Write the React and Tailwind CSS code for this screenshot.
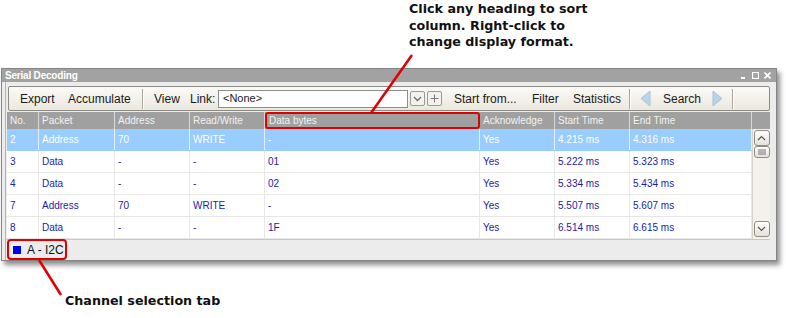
import React from "react";

const rows = [
  { no: "2", packet: "Address", addr: "70", rw: "WRITE", data: "-", ack: "Yes", start: "4.215 ms", end: "4.316 ms", sel: true },
  { no: "3", packet: "Data", addr: "-", rw: "-", data: "01", ack: "Yes", start: "5.222 ms", end: "5.323 ms" },
  { no: "4", packet: "Data", addr: "-", rw: "-", data: "02", ack: "Yes", start: "5.334 ms", end: "5.434 ms" },
  { no: "7", packet: "Address", addr: "70", rw: "WRITE", data: "-", ack: "Yes", start: "5.507 ms", end: "5.607 ms" },
  { no: "8", packet: "Data", addr: "-", rw: "-", data: "1F", ack: "Yes", start: "6.514 ms", end: "6.615 ms" },
];

const cols = "grid grid-cols-[32px_76px_75px_75px_215px_75px_75px_122px]";

function Sep() {
  return <div className="w-[2px] h-[20px] border-l border-[#a9a69c] border-r border-r-white" />;
}

function ScrollBtn({ children }) {
  return (
    <div className="w-[16px] h-[16px] rounded-[3px] border border-[#8f8d86] bg-gradient-to-b from-white to-[#e4e1d6] flex items-center justify-center">
      {children}
    </div>
  );
}

export default function App() {
  const headers = ["No.", "Packet", "Address", "Read/Write", "Data bytes", "Acknowledge", "Start Time", "End Time"];
  return (
    <div className="relative w-[786px] h-[318px] bg-white overflow-hidden font-['Liberation_Sans',Arial,sans-serif]">
      {/* Annotation */}
      <div className="h-[68px] pl-[409px] pt-[1px] font-['DejaVu_Sans',Verdana,sans-serif] font-bold text-[12.7px] leading-[16.5px] text-[#111]">
        <div>Click any heading to sort</div>
        <div>column. Right-click to</div>
        <div>change display format.</div>
      </div>

      {/* Window */}
      <div className="ml-[1px] w-[776px] border border-[#858585] bg-[#ececec] shadow-[3px_4px_5px_rgba(0,0,0,0.45)]">
        <div className="h-[13px] bg-[#a2a2a2] flex items-center justify-between pl-[3px] pr-[5px]">
          <span className="text-white font-bold text-[10px] leading-none tracking-[-0.2px]">Serial Decoding</span>
          <div className="flex items-center gap-[5px]">
            <svg width="7" height="7" viewBox="0 0 7 7"><rect x="1" y="5" width="4" height="2" fill="#fff" /></svg>
            <svg width="7" height="7" viewBox="0 0 7 7"><rect x="0.5" y="0.5" width="6" height="6" fill="none" stroke="#fff" strokeWidth="1.3" /></svg>
            <svg width="7" height="7" viewBox="0 0 7 7"><path d="M0.5 0.5L6.5 6.5M6.5 0.5L0.5 6.5" stroke="#fff" strokeWidth="1.6" /></svg>
          </div>
        </div>
        <div className="border-l border-[#b5b5b5] ml-[3px] mr-[6px] pt-[4px]">
          {/* Toolbar */}
          <div className="ml-[2px] h-[25px] border border-[#8c8a84] rounded-[2px] bg-gradient-to-b from-[#fbfaf7] to-[#ebe8de] flex items-center pl-[11px] text-[12px] text-[#1a1a1a]">
            <span className="w-[48px]">Export</span>
            <span className="w-[74px]">Accumulate</span>
            <Sep />
            <span className="ml-[10px] w-[36px]">View</span>
            <span className="w-[28px]">Link:</span>
            <div className="w-[190px] h-[18px] bg-white border border-[#8c8c8c] flex items-center pl-[4px] text-[11px]">&lt;None&gt;</div>
            <div className="ml-[2px] w-[15px] h-[15px] border border-[#9a9a9a] rounded-[2px] bg-[#f4f2ec] flex items-center justify-center">
              <svg width="9" height="6" viewBox="0 0 9 6"><path d="M1 1L4.5 4.5L8 1" fill="none" stroke="#6b6b6b" strokeWidth="1.3" /></svg>
            </div>
            <div className="ml-[2px] w-[15px] h-[15px] border border-[#9a9a9a] rounded-[2px] bg-[#f4f2ec] flex items-center justify-center">
              <svg width="9" height="9" viewBox="0 0 9 9"><path d="M4.5 0.5V8.5M0.5 4.5H8.5" stroke="#7a7a7a" strokeWidth="1" /></svg>
            </div>
            <span className="ml-[12px] w-[78px]">Start from...</span>
            <span className="w-[41px]">Filter</span>
            <span className="w-[56px]">Statistics</span>
            <Sep />
            <svg className="ml-[9px]" width="11" height="17" viewBox="0 0 11 17"><path d="M10 1L1 8.5L10 16Z" fill="#b9d3ec" stroke="#a5c3e2" /></svg>
            <span className="ml-[12px] w-[49px]">Search</span>
            <svg width="11" height="17" viewBox="0 0 11 17"><path d="M1 1L10 8.5L1 16Z" fill="#b9d3ec" stroke="#a5c3e2" /></svg>
            <div className="ml-[9px]"><Sep /></div>
          </div>

          {/* Table */}
          <div className="mt-[1px] ml-[1px]">
            <div className="flex h-[17px] bg-[#a0a0a0] text-[10px] text-[#f2f2f2]">
              <div className={cols}>
                {headers.map((h, i) => (
                  <div
                    key={h}
                    className={
                      "h-[17px] flex items-center pl-[3px] border-r border-[#d8d8d8] " +
                      (i === 4 ? "outline-[2.5px] outline-solid outline-[#e00000] -outline-offset-[2px] rounded-[3px] pl-[4px]" : "")
                    }
                  >
                    {h}
                  </div>
                ))}
              </div>
              <div className="flex-1" />
            </div>
            <div className="flex">
              <div className="flex flex-col">
                {rows.map((r, i) => (
                  <div
                    key={i}
                    className={
                      cols +
                      " h-[22px] text-[10px] border-b " +
                      (r.sel ? "bg-[#99ccff] text-white border-[#99ccff]" : "bg-white text-[#1c1ca8] border-[#e6e6e6]")
                    }
                  >
                    {[r.no, r.packet, r.addr, r.rw, r.data, r.ack, r.start, r.end].map((v, j) => (
                      <div key={j} className={"flex items-center pl-[3px] border-r " + (r.sel ? "border-white/70" : "border-[#e8e8e8]")}>
                        {v}
                      </div>
                    ))}
                  </div>
                ))}
              </div>
              <div className="w-[18px] h-[110px] bg-[#f3f1ea] border-l border-[#d6d3c8] flex flex-col items-center pt-[1px] pb-[2px]">
                <ScrollBtn>
                  <svg width="9" height="6" viewBox="0 0 9 6"><path d="M1 5L4.5 1.5L8 5" fill="none" stroke="#555" strokeWidth="1.2" /></svg>
                </ScrollBtn>
                <div className="w-[16px] h-[12px] rounded-[3px] border border-[#8f8d86] bg-gradient-to-b from-white to-[#e4e1d6] flex items-center justify-center">
                  <svg width="8" height="6" viewBox="0 0 8 6"><path d="M0 1H8M0 3H8M0 5H8" stroke="#666" strokeWidth="0.9" /></svg>
                </div>
                <div className="flex-1" />
                <ScrollBtn>
                  <svg width="9" height="6" viewBox="0 0 9 6"><path d="M1 1L4.5 4.5L8 1" fill="none" stroke="#555" strokeWidth="1.2" /></svg>
                </ScrollBtn>
              </div>
            </div>
          </div>

          {/* Bottom tab */}
          <div className="h-[21px] bg-[#ececec] border-t border-[#c8c8c8] flex items-start">
            <div className="ml-[1px] mt-[-1px] h-[21px] w-[60px] border-[2.5px] border-[#e00000] rounded-[4px] flex items-center pl-[4px]">
              <div className="w-[8px] h-[8px] bg-[#0000ee]" />
              <span className="ml-[6px] text-[12px] text-[#111] leading-none">A - I2C</span>
            </div>
          </div>
        </div>
      </div>

      {/* Bottom annotation */}
      <div className="pl-[65px] mt-[32px] font-['DejaVu_Sans',Verdana,sans-serif] font-bold text-[12.7px] leading-[16px] text-[#111]">
        Channel selection tab
      </div>

      {/* Red pointer lines */}
      <svg className="absolute left-0 top-0 pointer-events-none" width="786" height="318" viewBox="0 0 786 318">
        <line x1="412" y1="55" x2="371" y2="113" stroke="#e00000" strokeWidth="2.5" />
        <line x1="39" y1="260" x2="61" y2="295" stroke="#e00000" strokeWidth="2.5" />
      </svg>
    </div>
  );
}
